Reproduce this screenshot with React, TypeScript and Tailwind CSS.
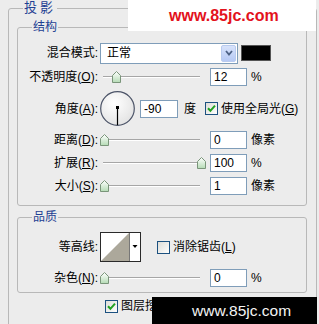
import React from "react";

const U = ({ c }: { c: string }) => <span className="underline underline-offset-[1px]">{c}</span>;

function Thumb() {
  return (
    <svg width="9" height="12" viewBox="0 0 9 12">
      <defs>
        <linearGradient id="thumbg" x1="0" y1="0" x2="0" y2="1">
          <stop offset="0" stopColor="#ffffff" />
          <stop offset="1" stopColor="#b5dbb5" />
        </linearGradient>
      </defs>
      <path d="M0.5 11.5 V4.5 L4.5 0.5 L8.5 4.5 V11.5 Z" fill="url(#thumbg)" stroke="#7a957a" />
    </svg>
  );
}

function Slider({ value }: { value: number }) {
  return (
    <div className="relative flex h-[18px] w-[104px] shrink-0 items-center">
      <div className="ml-[3px] h-[2px] w-[97px] border-t border-b border-t-[#a6a6a6] border-b-white" />
      <div className="absolute top-[3px] flex" style={{ left: value * 0.97 }}>
        <Thumb />
      </div>
    </div>
  );
}

function Field({ v, w = "w-[37px]" }: { v: string; w?: string }) {
  return (
    <div className={`flex h-[18px] ${w} shrink-0 items-center border border-[#7f9db9] bg-white pl-[3px] text-[12px] leading-none`}>
      {v}
    </div>
  );
}

function Check({ on }: { on: boolean }) {
  return (
    <svg width="13" height="13" viewBox="0 0 13 13" className="shrink-0">
      <defs>
        <linearGradient id="chkg" x1="0" y1="0" x2="1" y2="1">
          <stop offset="0" stopColor="#dcdcd6" />
          <stop offset="1" stopColor="#ffffff" />
        </linearGradient>
      </defs>
      <rect x="0.5" y="0.5" width="12" height="12" fill="url(#chkg)" stroke="#1c5180" />
      {on && <path d="M3 6.2 L5.4 8.8 L10 3.6" fill="none" stroke="#21a121" strokeWidth="2" />}
    </svg>
  );
}

function Label({ children }: { children: React.ReactNode }) {
  return <div className="w-[80px] shrink-0 whitespace-nowrap text-right text-[12px] leading-none">{children}</div>;
}

function Dial() {
  return (
    <svg width="36" height="36" viewBox="0 0 36 36" className="shrink-0">
      <defs>
        <radialGradient id="dialg" cx="0.4" cy="0.35" r="0.7">
          <stop offset="0" stopColor="#ffffff" />
          <stop offset="1" stopColor="#e2e2e2" />
        </radialGradient>
      </defs>
      <circle cx="17.5" cy="17.5" r="16.8" fill="url(#dialg)" stroke="#4c5468" strokeWidth="1.2" />
      <rect x="16" y="15" width="3" height="3" fill="#000" />
      <line x1="17.5" y1="17" x2="17.5" y2="34" stroke="#000" strokeWidth="1.2" />
    </svg>
  );
}

function Contour() {
  return (
    <svg width="41" height="30" viewBox="0 0 41 30" className="shrink-0">
      <rect x="0.5" y="0.5" width="40" height="29" fill="#fff" stroke="#2a2a2a" />
      <polygon points="1,29 29,1 29,29" fill="#aca89b" />
      <line x1="29.5" y1="1" x2="29.5" y2="29" stroke="#777" />
      <polygon points="32.5,13 37.5,13 35,16" fill="#000" />
    </svg>
  );
}

export default function App() {
  return (
    <div className="relative h-[324px] w-[319px] overflow-hidden bg-[#ececec] font-['Liberation_Sans','Noto_Sans_CJK_SC',sans-serif] text-black">
      <fieldset className="ml-[8px] h-[340px] w-[309px] rounded-[3px] border border-[#b8b8b8]">
        <legend className="ml-[14px] block h-[16px] px-[1px] text-[13px] leading-[16px] tracking-[3px] text-[#1e3f93]">投影</legend>

        <fieldset className="ml-[8px] mt-[3px] w-[290px] rounded-[3px] border border-[#b8b8b8] pb-[10px]">
          <legend className="ml-[14px] block h-[16px] px-[1px] text-[12px] leading-[16px] text-[#1e3f93]">结构</legend>

          <div className="mt-[7px] flex h-[22px] items-center gap-[2px]">
            <Label>混合模式:</Label>
            <div className="flex h-[21px] w-[138px] shrink-0 items-center border border-[#7f9db9] bg-white">
              <div className="flex-1 pl-[6px] text-[12px] leading-none">正常</div>
              <div className="mr-[1px] flex h-[17px] w-[15px] items-center justify-center rounded-[2px] border border-[#b9cbef] bg-gradient-to-b from-[#d8e3fb] to-[#b6c9f4]">
                <svg width="8" height="6" viewBox="0 0 8 6">
                  <polyline points="1,1 4,4.5 7,1" fill="none" stroke="#4d6185" strokeWidth="1.8" />
                </svg>
              </div>
            </div>
            <div className="ml-[1px] h-[16px] w-[30px] shrink-0 border border-[#555] bg-black" />
          </div>

          <div className="mt-[4px] flex h-[18px] items-center gap-[2px]">
            <Label>
              不透明度(<U c="O" />):
            </Label>
            <Slider value={12} />
            <div className="ml-[4px] flex items-center">
              <Field v="12" />
              <span className="ml-[4px] text-[12px]">%</span>
            </div>
          </div>

          <div className="mt-[5px] flex h-[35px] items-center gap-[2px]">
            <Label>
              角度(<U c="A" />):
            </Label>
            <Dial />
            <div className="ml-[2px] flex items-center">
              <Field v="-90" w="w-[38px]" />
              <span className="ml-[6px] text-[12px]">度</span>
              <div className="ml-[9px] flex items-center">
                <Check on />
                <span className="ml-[3px] whitespace-nowrap text-[12px]">
                  使用全局光(<U c="G" />)
                </span>
              </div>
            </div>
          </div>

          <div className="mt-[5px] flex h-[18px] items-center gap-[2px]">
            <Label>
              距离(<U c="D" />):
            </Label>
            <Slider value={0} />
            <div className="ml-[4px] flex items-center">
              <Field v="0" />
              <span className="ml-[4px] text-[12px]">像素</span>
            </div>
          </div>

          <div className="mt-[5px] flex h-[18px] items-center gap-[2px]">
            <Label>
              扩展(<U c="R" />):
            </Label>
            <Slider value={100} />
            <div className="ml-[4px] flex items-center">
              <Field v="100" />
              <span className="ml-[4px] text-[12px]">%</span>
            </div>
          </div>

          <div className="mt-[5px] flex h-[18px] items-center gap-[2px]">
            <Label>
              大小(<U c="S" />):
            </Label>
            <Slider value={0} />
            <div className="ml-[4px] flex items-center">
              <Field v="1" />
              <span className="ml-[4px] text-[12px]">像素</span>
            </div>
          </div>
        </fieldset>

        <fieldset className="ml-[8px] mt-[3px] w-[290px] rounded-[3px] border border-[#b8b8b8] pb-[5px]">
          <legend className="ml-[14px] block h-[16px] px-[1px] text-[12px] leading-[16px] text-[#1e3f93]">品质</legend>

          <div className="mt-[7px] flex h-[30px] items-center gap-[2px]">
            <Label>等高线:</Label>
            <Contour />
            <div className="ml-[14px] flex items-center">
              <Check on={false} />
              <span className="ml-[3px] whitespace-nowrap text-[12px]">
                消除锯齿(<U c="L" />)
              </span>
            </div>
          </div>

          <div className="mt-[7px] flex h-[18px] items-center gap-[2px]">
            <Label>
              杂色(<U c="N" />):
            </Label>
            <Slider value={0} />
            <div className="ml-[4px] flex items-center">
              <Field v="0" />
              <span className="ml-[4px] text-[12px]">%</span>
            </div>
          </div>
        </fieldset>

        <div className="ml-[96px] mt-[6px] flex h-[14px] items-center">
          <Check on />
          <div className="ml-[3px] w-[31px] overflow-hidden whitespace-nowrap text-[12px]">
            图层挖空投影(<U c="U" />)
          </div>
        </div>
      </fieldset>

      <div className="absolute left-[128px] top-0 flex h-[31px] w-[188px] items-center bg-white pl-[41px] text-[16px] font-bold text-[#e3121c]">
        www.85jc.com
      </div>
      <div className="absolute left-[152px] top-[297px] flex h-[27px] w-[165px] items-center bg-black pl-[40px] text-[15.5px] text-[#f4f4f4]">
        www.85jc.com
      </div>
    </div>
  );
}
